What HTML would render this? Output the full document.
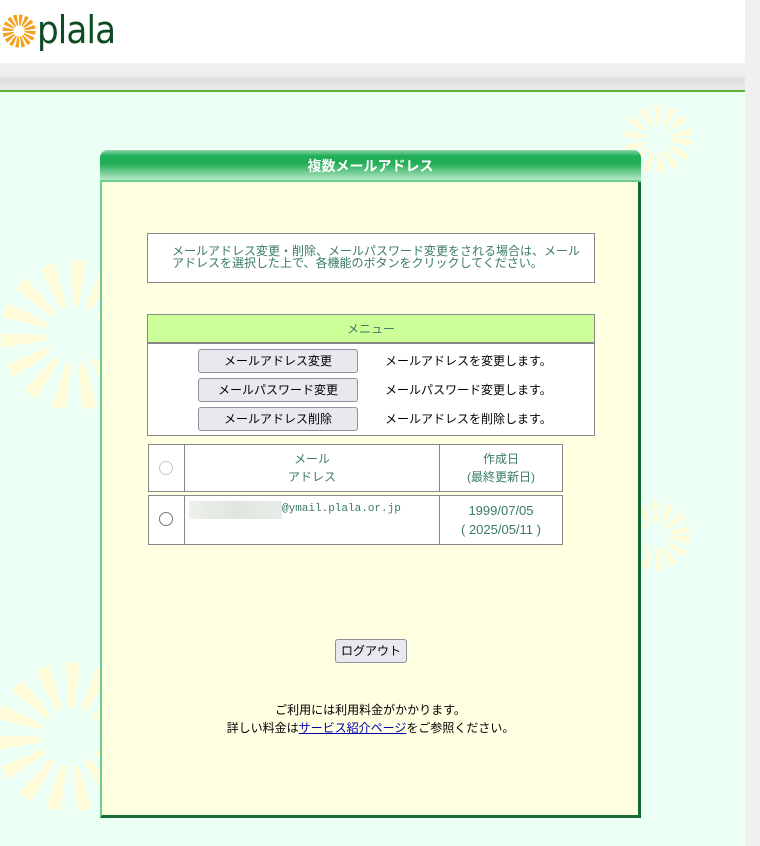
<!DOCTYPE html>
<html><head><meta charset="utf-8">
<style>
*{margin:0;padding:0;box-sizing:border-box}
body{width:760px;height:846px;overflow:hidden;background:#ecfff5;font-family:"Liberation Sans","Noto Sans CJK JP",sans-serif;font-size:12px;position:relative}
.a{position:absolute}
.btn{position:absolute;background:#e9e8ee;border:1px solid #8f8f9d;border-radius:3px;font-size:12px;text-align:center;color:#000;line-height:22px}
.t{position:absolute;font-size:12px;color:#000}
.g{color:#3a7a68}
</style></head><body>
<div class="a" style="left:0;top:0;width:745px;height:63px;background:#fff"></div>
<div class="a" style="left:0;top:63px;width:745px;height:28px;background:linear-gradient(#f1f1f1,#ececec 50%,#dcdcdc 55%,#ebebeb)"></div>
<div class="a" style="left:0;top:90px;width:745px;height:2px;background:#5db33a"></div>
<div class="a" style="left:745px;top:0;width:15px;height:846px;background:#f0f0f0"></div>
<svg class="a" style="left:2px;top:14px" width="34" height="34" viewBox="0 0 34 34"><circle cx="17" cy="17" r="11" fill="none" stroke="#f4a01c" stroke-width="11" stroke-dasharray="2.6 1.7"/></svg>
<div class="a" style="left:37px;top:6px;font-size:38px;color:#0e4a22;letter-spacing:-1px;font-family:'DejaVu Sans',sans-serif;line-height:48px;transform:scaleX(0.9);transform-origin:left">plala</div>
<svg class="a" style="left:0;top:92px" width="745" height="754">
<g fill="none" stroke="#fffbd8" stroke-dasharray="5 6">
<circle cx="658" cy="47" r="24" stroke-width="20"/>
<circle cx="656" cy="444" r="24" stroke-width="20"/>
<circle cx="75" cy="243" r="52" stroke-width="45" stroke-dasharray="10 12"/>
<circle cx="70" cy="645" r="52" stroke-width="45" stroke-dasharray="10 12"/>
</g></svg>
<div class="a" style="left:100px;top:150px;width:541px;height:668px;background:#ffffe2;border-left:2px solid #6ccf8f;border-right:3px solid #0f6a35;border-bottom:3px solid #1a6a3a;border-radius:8px 8px 0 0"></div>
<div class="a" style="left:100px;top:150px;width:541px;height:32px;border-radius:8px 8px 0 0;background:linear-gradient(#8fd6a8,#1fae55 20%,#22ad57 45%,#b6e8c6);border-bottom:2px solid #6ccf8f;color:#fff;font-weight:bold;font-size:14px;text-align:center;line-height:32px">複数メールアドレス</div>
<div class="a g" style="left:147px;top:233px;width:448px;height:50px;background:#fff;border:1px solid #888;padding:11px 0 0 24px;font-size:12px;line-height:12px">メールアドレス変更・削除、メールパスワード変更をされる場合は、メール<br>アドレスを選択した上で、各機能のボタンをクリックしてください。</div>
<div class="a" style="left:147px;top:314px;width:448px;height:122px;background:#fff;border:1px solid #888"></div>
<div class="a g" style="left:148px;top:315px;width:446px;height:29px;background:#cdff98;border-bottom:2px solid #888;text-align:center;line-height:28px">メニュー</div>
<div class="btn" style="left:198px;top:349px;width:160px;height:24px">メールアドレス変更</div>
<div class="btn" style="left:198px;top:378px;width:160px;height:24px">メールパスワード変更</div>
<div class="btn" style="left:198px;top:407px;width:160px;height:24px">メールアドレス削除</div>
<div class="t" style="left:385px;top:352px">メールアドレスを変更します。</div>
<div class="t" style="left:385px;top:381px">メールパスワード変更します。</div>
<div class="t" style="left:385px;top:410px">メールアドレスを削除します。</div>
<div class="a" style="left:148px;top:444px;width:415px;height:48px;background:#fff;border:1px solid #888"></div>
<div class="a" style="left:184px;top:444px;width:1px;height:48px;background:#888"></div>
<div class="a" style="left:439px;top:444px;width:1px;height:48px;background:#888"></div>
<div class="a" style="left:159px;top:461px;width:14px;height:14px;border:1px solid #c8c8c8;border-radius:50%;background:#fff"></div>
<div class="a g" style="left:185px;top:450px;width:254px;text-align:center;line-height:18px">メール<br>アドレス</div>
<div class="a g" style="left:440px;top:450px;width:122px;text-align:center;line-height:18px">作成日<br>(最終更新日)</div>
<div class="a" style="left:148px;top:495px;width:415px;height:50px;background:#fff;border:1px solid #888"></div>
<div class="a" style="left:184px;top:495px;width:1px;height:50px;background:#888"></div>
<div class="a" style="left:439px;top:495px;width:1px;height:50px;background:#888"></div>
<div class="a" style="left:159px;top:512px;width:14px;height:14px;border:1px solid #777;border-radius:50%;background:#fff"></div>
<div class="a" style="left:189px;top:501px;width:93px;height:18px;background:linear-gradient(90deg,#eef0ec,#dfe6df,#e8ece8)"></div>
<div class="a g" style="left:282px;top:503px;font-family:'Liberation Mono',monospace;font-size:11px">@ymail.plala.or.jp</div>
<div class="a g" style="left:440px;top:501px;width:122px;text-align:center;line-height:19px;font-size:13px">1999/07/05<br>( 2025/05/11 )</div>
<div class="btn" style="left:335px;top:639px;width:72px;height:24px">ログアウト</div>
<div class="t" style="left:100px;top:701px;width:541px;text-align:center;line-height:18px">ご利用には利用料金がかかります。<br>詳しい料金は<span style="color:#00a;text-decoration:underline">サービス紹介ページ</span>をご参照ください。</div>
</body></html>
